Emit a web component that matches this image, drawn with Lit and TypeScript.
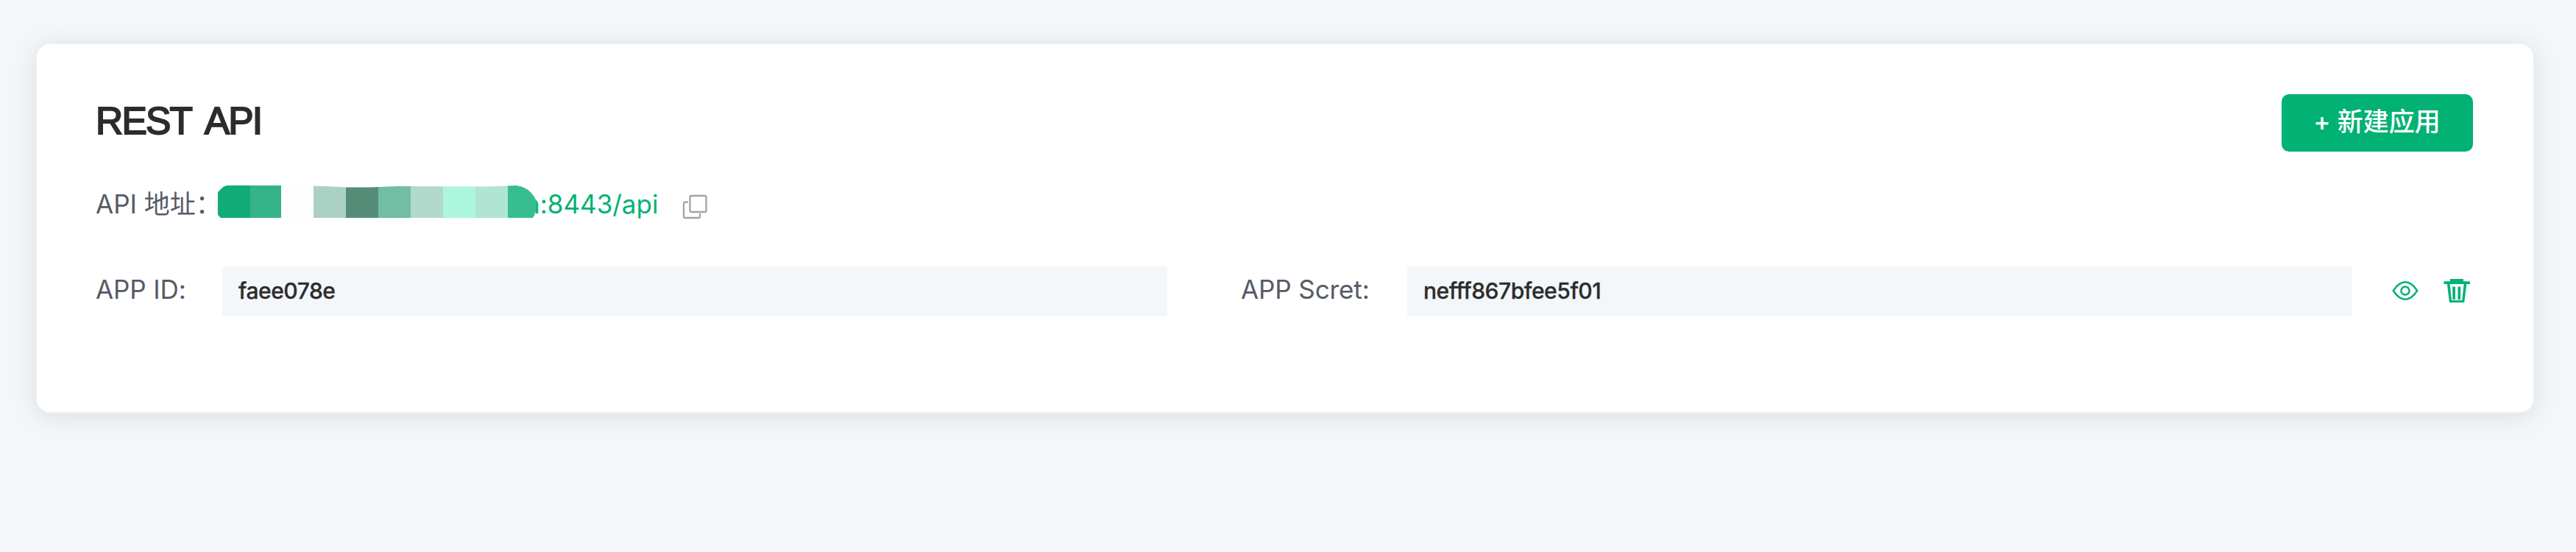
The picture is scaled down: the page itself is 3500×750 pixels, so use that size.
import { LitElement, html, css, svg } from "lit";
import { customElement } from "lit/decorators.js";

const BLOCKS: [number, number, string][] = [
  [4, 44, "#11ac77"],
  [48, 42, "#35b388"],
  [90, 44, "#fdfdfd"],
  [134, 44, "#abd1c4"],
  [178, 44, "#558c78"],
  [222, 44, "#72bda4"],
  [266, 44, "#b2d9cc"],
  [310, 44, "#adf6de"],
  [354, 44, "#b0e5d3"],
  [398, 40, "#37bd90"],
];

@customElement("app-root")
export class AppRoot extends LitElement {
  static styles = css`
    :host {
      display: block;
      box-sizing: border-box;
      height: 750px;
      padding: 58px 56px 0 48px;
      background: #f3f7fa;
      font-family: Inter, "Noto Sans CJK SC", sans-serif;
      color: #565b66;
      overflow: hidden;
    }
    .card {
      box-sizing: border-box;
      height: 504px;
      padding: 68px 82px 0 80px;
      border: 2px solid #ebeef5;
      border-radius: 20px;
      background: #fff;
      box-shadow: 0 4px 32px rgba(0, 0, 0, 0.1);
    }
    .head,
    .address,
    .keys,
    .field {
      display: flex;
      align-items: center;
    }
    .head {
      height: 78px;
      justify-content: space-between;
    }
    .title {
      margin: 0;
      padding-bottom: 6px;
      font: 400 51.5px/72px "Liberation Sans", sans-serif;
      font-kerning: none;
      letter-spacing: -1.8px;
      word-spacing: 5px;
      color: #2c2c2c;
      -webkit-text-stroke: 1.9px #2c2c2c;
      white-space: nowrap;
    }
    .create {
      display: flex;
      align-items: center;
      justify-content: center;
      width: 260px;
      height: 78px;
      padding: 0 1px 4px 0;
      border: 0;
      border-radius: 10px;
      background: #02b174;
      color: #fff;
      font: 500 35px/50px Inter, "Noto Sans CJK SC", sans-serif;
      white-space: pre;
    }
    .address {
      height: 52px;
      margin-top: 46px;
    }
    .label {
      flex: none;
      font-size: 35px;
      line-height: 52px;
      white-space: nowrap;
    }
    .address .label {
      width: 162px;
      padding-bottom: 2px;
    }
    .mosaic {
      flex: none;
      display: block;
      position: relative;
      z-index: 1;
    }
    .url {
      margin-left: -19px;
      padding-bottom: 2px;
      font-size: 35px;
      line-height: 52px;
      color: #02b174;
    }
    .copy {
      display: block;
      margin: 6px 0 0 33px;
    }
    .keys {
      height: 68px;
      margin-top: 58px;
    }
    .field {
      height: 68px;
    }
    .field .label {
      padding-bottom: 6px;
      letter-spacing: -0.1px;
    }
    .id .label {
      width: 172px;
    }
    .secret {
      margin-left: 100px;
    }
    .secret .label {
      width: 226px;
    }
    .value {
      box-sizing: border-box;
      width: 1284px;
      height: 68px;
      padding-left: 22px;
      background: #f3f7fa;
      color: #2c2c2c;
      font-size: 30px;
      font-weight: 500;
      line-height: 66px;
      letter-spacing: -0.45px;
      -webkit-text-stroke: 0.3px #2c2c2c;
    }
    .eye {
      margin-left: 54px;
      margin-bottom: 2px;
    }
    .trash {
      margin-left: 34px;
      margin-bottom: 2px;
    }
  `;

  render() {
    return html`
      <section class="card">
        <header class="head">
          <h1 class="title">REST API</h1>
          <button class="create">+ 新建应用</button>
        </header>
        <div class="address">
          <span class="label">API 地址：</span>
          <svg class="mosaic" width="440" height="52" viewBox="0 0 440 52">
            <clipPath id="blob">
              <path d="M4 9L9 4Q13 0 18 0H100L150 1L180 2.500L210 2.500L250 1L370 1.500L410 0Q428 2 437 21V27Q437 37 432 44H8L4 40Z" />
            </clipPath>
            <path d="M4 8Q-5 24 4 40Z" fill="#f5f5fa" />
            <g clip-path="url(#blob)">
              ${BLOCKS.map(([x, w, fill]) => svg`<rect x=${x} y="0" width=${w} height="52" fill=${fill} />`)}
            </g>
          </svg>
          <span class="url">n:8443/api</span>
          <svg class="copy" width="34" height="34" viewBox="0 0 34 34" fill="none" stroke="#a3a3a3" stroke-width="2.300">
            <rect x="10.500" y="2" width="22" height="22" rx="2" />
            <path d="M8 10.500H4Q2 10.500 2 12.500V30Q2 32 4 32H22Q24 32 24 30V26" />
          </svg>
        </div>
        <div class="keys">
          <div class="field id">
            <span class="label">APP ID:</span>
            <div class="value">faee078e</div>
          </div>
          <div class="field secret">
            <span class="label">APP Scret:</span>
            <div class="value">nefff867bfee5f01</div>
          </div>
          <svg class="eye" width="36" height="26" viewBox="0 0 36 26" fill="none" stroke="#02b174" stroke-width="2.500">
            <path d="M1.800 13C7 5 12.500 1.300 18 1.300S29 5 34.200 13C29 21 23.500 24.700 18 24.700S7 21 1.800 13Z" />
            <circle cx="18" cy="13" r="5.600" />
          </svg>
          <svg class="trash" width="36" height="32" viewBox="0 0 36 32" fill="#02b174">
            <path d="M9 0H27V3.300H36V7H0.500V3.300H9Z" />
            <path fill-rule="evenodd" d="M4.800 6H31.500L28.200 32H8ZM8.600 7L11 29H25.200L27.700 7Z" />
            <rect x="12.300" y="10.500" width="3.700" height="17.500" />
            <rect x="19.500" y="10.500" width="3.700" height="17.500" />
          </svg>
        </div>
      </section>
    `;
  }
}
